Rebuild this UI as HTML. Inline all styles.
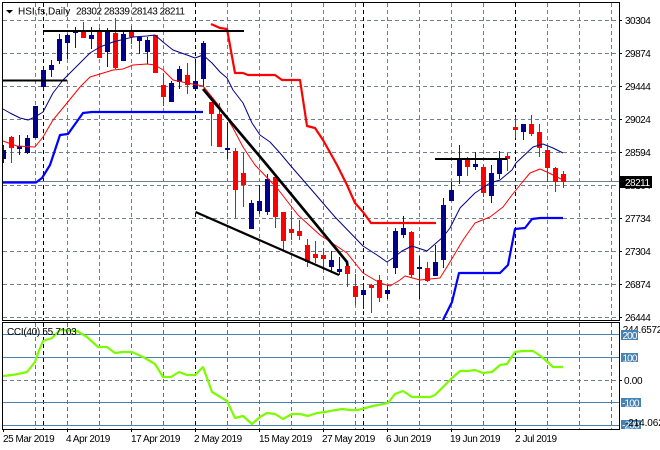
<!DOCTYPE html>
<html><head><meta charset="utf-8"><style>
html,body{margin:0;padding:0;background:#fff;width:660px;height:450px;overflow:hidden}
svg{display:block}
text{font-family:"Liberation Sans",sans-serif;font-size:10px;fill:#000;letter-spacing:-.45px}
.p text{letter-spacing:-.5px}
</style></head><body>
<svg width="660" height="450" viewBox="0 0 660 450" xmlns="http://www.w3.org/2000/svg">
<rect width="660" height="450" fill="#fff"/>
<g shape-rendering="crispEdges" fill="none">
<path stroke="#708090" stroke-dasharray="4 3" d="M3 20.5H619M3 53.5H619M3 86.5H619M3 119.5H619M3 152.5H619M3 185.5H619M3 218.5H619M3 251.5H619M3 284.5H619M3 317.5H619"/>
<path stroke="#708090" stroke-dasharray="4 3" d="M35.5 3V320M67.5 3V320M99.5 3V320M131.5 3V320M163.5 3V320M227.5 3V320M259.5 3V320M291.5 3V320M323.5 3V320M355.5 3V320M387.5 3V320M419.5 3V320M451.5 3V320M483.5 3V320M547.5 3V320M579.5 3V320M611.5 3V320"/>
<path stroke="#707070" stroke-dasharray="4 3" d="M35.5 323V429M67.5 323V429M99.5 323V429M131.5 323V429M163.5 323V429M227.5 323V429M259.5 323V429M291.5 323V429M323.5 323V429M355.5 323V429M387.5 323V429M419.5 323V429M451.5 323V429M483.5 323V429M547.5 323V429M579.5 323V429M611.5 323V429"/>
<path stroke="#000" stroke-dasharray="4 3" d="M43.5 3V320M195.5 3V320M363.5 3V320M515.5 3V320M43.5 323V429M195.5 323V429M363.5 323V429M515.5 323V429"/>
<path stroke="#708090" d="M3 181.5H619"/>
<path stroke="#4682b4" d="M3 334.5H619M3 357.5H619M3 402.5H619M3 425.5H619"/>
<path stroke="#708090" stroke-dasharray="4 3" d="M3 380.5H619"/>
</g>
<!-- candles -->
<g shape-rendering="crispEdges">
<path stroke="#00f" fill="none" d="M3.5 145V163M19.5 135V155M27.5 135V154M35.5 106V138M43.5 69V90M51.5 60V77M59.5 34V64M67.5 34V59M75.5 27V48M91.5 27V49M107.5 28V67M123.5 32V61M139.5 36V54M147.5 37V64M171.5 81V102M179.5 66V89M195.5 63V88M203.5 41V87M227.5 122V159M251.5 200V229M259.5 185V214M267.5 174V215M331.5 251V273M339.5 257V275M363.5 284V309M387.5 285V299M395.5 228V274M403.5 216V238M419.5 256V299M435.5 245V276M443.5 198V268M451.5 182V201M459.5 145V184M475.5 152V170M491.5 165V203M499.5 151V179M523.5 124V140"/>
<path fill="#00008b" d="M3 150h3v9h-3zM17 146h5v3h-5zM25 138h5v15h-5zM33 106h5v32h-5zM41 70h5v17h-5zM49 65h5v5h-5zM57 39h5v22h-5zM65 35h5v8h-5zM73 30h5v3h-5zM89 35h5v4h-5zM105 32h5v20h-5zM121 34h5v27h-5zM137 37h5v4h-5zM145 40h5v12h-5zM169 83h5v19h-5zM177 69h5v13h-5zM193 81h5v8h-5zM201 43h5v36h-5zM225 148h5v2h-5zM249 203h5v26h-5zM257 201h5v10h-5zM265 179h5v33h-5zM329 260h5v7h-5zM337 269h5v3h-5zM361 290h5v5h-5zM385 290h5v4h-5zM393 231h5v37h-5zM401 228h5v7h-5zM417 267h5v2h-5zM433 262h5v14h-5zM441 205h5v55h-5zM449 190h5v11h-5zM457 159h5v17h-5zM473 164h5v3h-5zM489 173h5v23h-5zM497 158h5v16h-5zM521 124h5v8h-5z"/>
<path stroke="#f00" fill="none" d="M11.5 136V163M83.5 22V38M99.5 28V58M115.5 18V69M131.5 26V44M155.5 35V73M163.5 73V106M187.5 63V94M211.5 102V146M219.5 103V147M235.5 148V218M243.5 153V207M275.5 175V228M283.5 212V251M291.5 211V240M299.5 220V240M307.5 239V267M315.5 241V263M323.5 248V270M347.5 262V287M355.5 274V305M371.5 284V313M379.5 275V302M411.5 231V278M427.5 262V282M467.5 157V176M483.5 165V197M507.5 153V171M515.5 117V138M531.5 115V136M539.5 124V157M547.5 147V182M555.5 167V192M563.5 171V188"/>
<path fill="#f00" d="M9 137h5v11h-5zM81 32h5v6h-5zM97 31h5v27h-5zM113 33h5v35h-5zM129 32h5v5h-5zM153 35h5v38h-5zM161 85h5v12h-5zM185 75h5v10h-5zM209 102h5v12h-5zM217 114h5v33h-5zM233 151h5v39h-5zM241 173h5v12h-5zM273 177h5v40h-5zM281 212h5v29h-5zM289 229h5v4h-5zM297 231h5v5h-5zM305 245h5v17h-5zM313 254h5v4h-5zM321 255h5v4h-5zM345 266h5v8h-5zM353 286h5v11h-5zM369 285h5v3h-5zM377 280h5v18h-5zM409 232h5v43h-5zM425 268h5v13h-5zM465 160h5v7h-5zM481 167h5v26h-5zM505 156h5v3h-5zM513 127h5v3h-5zM529 124h5v10h-5zM537 132h5v16h-5zM545 150h5v18h-5zM553 168h5v14h-5zM561 174h5v8h-5z"/>
</g>
<!-- MA lines -->
<g fill="none" stroke-linejoin="round">
<polyline stroke="#00008b" stroke-width="1" points="3,109 10,113 20,118 28,120 35,117 43,112 53,93 63,80 80,63 90,53 100,47 113,42 133,37 147,36 155,35 163,42 173,50 187,55 195,58 203,55 212,63 220,72 227,78 233,90 243,103 252,123 260,135 270,142 280,153 290,165 310,188 335,217 363,246 377,255 387,262 393,258 402,251 412,246 427,251 443,237 450,228 460,208 475,193 490,183 500,180 512,170 516,163 533,147 543,144 553,148 563,153"/>
<polyline stroke="#f00" stroke-width="1" points="3,141 17,146 35,147 43,137 53,120 67,103 80,87 90,77 100,74 113,70 123,69 133,65 147,64 155,65 163,70 173,80 187,83 203,86 220,107 233,128 243,147 255,165 277,188 298,215 320,235 335,245 347,253 363,273 380,283 390,286 400,280 405,276 420,280 440,278 450,262 463,240 475,223 490,217 503,207 512,195 520,185 530,173 540,169 547,172 563,180"/>
<polyline stroke="#00f" stroke-width="2.2" points="3,182.5 36,182.5 42,178 50,165 60,135 68,134 83,113 92,112 203,112"/>
<polyline stroke="#00f" stroke-width="2.2" points="443,320 452,302 459,273 500,273 508,265 515,229 525,228 532,219 540,218 563,218"/>
<polyline stroke="#f00" stroke-width="2.2" points="211,24 220,28 227,29 235,73 243,73 248,75 275,75 282,80 300,80 307,126 315,128 323,140 337,165 347,185 355,203 363,212 371,223 436,223"/>
<polyline stroke="#7cfc00" stroke-width="2.2" points="3,376 12,375 18,374 27,372 35,362 38,353 43,341 52,338 60,330 77,331 87,337 98,347 107,347 115,353 123,352 132,352 143,357 155,364 163,377 171,377 179,372 187,375 195,375 203,367 212,392 227,401 235,418 243,416 252,424 260,417 267,413 275,414 283,419 292,414 300,414 308,416 317,413 325,412 330,411 342,409 350,410 358,410 373,406 388,403 395,394 403,391 412,397 430,397 435,395 452,378 460,371 468,371 475,370 483,373 492,372 500,365 507,364 515,352 523,351 533,351 542,357 553,367 563,367"/>
</g>
<!-- trend lines -->
<g fill="none" stroke="#000">
<path stroke-width="2" shape-rendering="crispEdges" d="M43 31H244M3 80.5H67M435 159H507"/>
<path stroke-width="2.7" d="M203 89L267 165L347 262L347.5 266"/>
<path stroke-width="2.2" d="M195.5 212L339 275"/>
</g>
<!-- frames -->
<g shape-rendering="crispEdges" fill="none" stroke="#000">
<path stroke-width="1" d="M2.5 2.5H619.5V320.5H2.5ZM2.5 322.5H619.5V429.5H2.5Z"/>
<path d="M619 20.5h3M619 53.5h3M619 86.5h3M619 119.5h3M619 152.5h3M619 185.5h3M619 218.5h3M619 251.5h3M619 284.5h3M619 317.5h3M619 380.5h3"/>
<path d="M3.5 430v2M67.5 430v2M131.5 430v2M195.5 430v2M259.5 430v2M323.5 430v2M387.5 430v2M451.5 430v2M515.5 430v2"/>
</g>
<!-- header -->
<path d="M6 10h7l-3.5 3.5z" fill="#000"/>
<text x="18" y="14.5" style="letter-spacing:0">HSI,fs,Daily</text>
<text x="76" y="14.5">28302 28339 28143 28211</text>
<text x="7" y="335" style="letter-spacing:-.3px">CCI(40) 55.7103</text>
<!-- price axis -->
<g class="p">
<text x="625" y="24">30304</text>
<text x="625" y="57">29874</text>
<text x="625" y="90">29444</text>
<text x="625" y="123">29024</text>
<text x="625" y="156">28594</text>
<text x="625" y="189">28164</text>
<text x="625" y="222">27734</text>
<text x="625" y="255">27304</text>
<text x="625" y="288">26874</text>
<text x="625" y="321">26444</text>
</g>
<rect x="620" y="176" width="32" height="12" fill="#000" shape-rendering="crispEdges"/>
<text x="625" y="186" style="fill:#fff;letter-spacing:-.5px">28211</text>
<!-- CCI axis -->
<text x="622.7" y="333" style="letter-spacing:-.3px">244.6572</text>
<g shape-rendering="crispEdges" fill="#4682b4">
<rect x="621" y="330" width="17" height="10"/>
<rect x="621" y="353" width="17" height="9"/>
<rect x="621" y="398" width="20" height="9"/>
<rect x="621" y="420" width="20" height="9"/>
</g>
<text x="622.5" y="339" style="fill:#fff;letter-spacing:-.9px">200</text>
<text x="622.5" y="361.5" style="fill:#fff;letter-spacing:-.9px">100</text>
<text x="624" y="384" style="letter-spacing:-.3px">0.00</text>
<text x="622" y="406.5" style="fill:#fff;letter-spacing:-.8px">-100</text>
<text x="622" y="428.5" style="fill:#fff;letter-spacing:-.8px">-200</text>
<text x="625" y="426" style="letter-spacing:-.1px">-214.062</text>
<!-- dates -->
<text x="3" y="442">25 Mar 2019</text>
<text x="66" y="442">4 Apr 2019</text>
<text x="131" y="442">17 Apr 2019</text>
<text x="194" y="442">2 May 2019</text>
<text x="259" y="442">15 May 2019</text>
<text x="322" y="442">27 May 2019</text>
<text x="386" y="442">6 Jun 2019</text>
<text x="450" y="442">19 Jun 2019</text>
<text x="515" y="442">2 Jul 2019</text>
</svg>
</body></html>
